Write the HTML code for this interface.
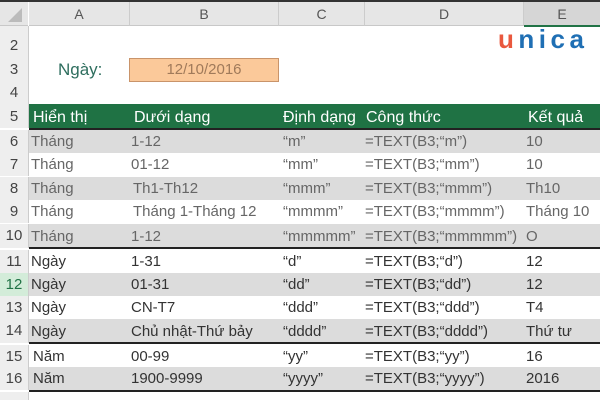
<!DOCTYPE html><html><head><meta charset="utf-8"><style>
body{margin:0;width:600px;height:400px;overflow:hidden;background:#fff;font-family:"Liberation Sans",sans-serif;position:relative}
.a{position:absolute}
.hdr{top:0;height:25px;background:#e6e6e6;border-bottom:1px solid #c8c8c8;color:#555;font-size:14px;line-height:26px;text-align:center}
.rh{left:0;width:28px;background:#eeeeee;color:#444;font-size:15px;text-align:center;border-right:1px solid #ccc}
.row{left:29px;width:571px;font-size:15px;color:#333}
.row span{position:absolute;top:0}
.g{background:#dcdcdc}
.l{color:#666}
</style></head><body>
<div class="a" style="left:0;top:0;width:600px;height:2px;background:#333"></div>
<div class="a hdr" style="left:0;width:28px;top:2px;height:23px"><svg width="28" height="23"><polygon points="22,6 22,20 8,20" fill="#bbb"/></svg></div>
<div class="a hdr" style="left:29px;width:100px;top:2px;height:23px;line-height:24px;border-right:1px solid #ccc">A</div>
<div class="a hdr" style="left:130px;width:148px;top:2px;height:23px;line-height:24px;border-right:1px solid #ccc">B</div>
<div class="a hdr" style="left:279px;width:85px;top:2px;height:23px;line-height:24px;border-right:1px solid #ccc">C</div>
<div class="a hdr" style="left:365px;width:158px;top:2px;height:23px;line-height:24px;border-right:1px solid #ccc">D</div>
<div class="a hdr" style="left:524px;width:76px;top:2px;height:23px;line-height:24px;background:#d6d6d6;border-bottom:2px solid #217346">E</div>
<div class="a rh" style="top:26px;height:8px"></div>
<div class="a rh" style="top:34px;height:23px;line-height:23px">2</div>
<div class="a rh" style="top:57px;height:25px;line-height:25px">3</div>
<div class="a rh" style="top:82px;height:22px;line-height:22px">4</div>
<div class="a" style="left:58px;top:60px;font-size:17px;color:#2e6e5e">Ngày:</div>
<div class="a" style="left:129px;top:58px;width:148px;height:22px;background:#fbc99a;border:1px solid #c9946a;color:#a07a5a;font-size:15px;line-height:22px;text-align:center">12/10/2016</div>
<div class="a" style="left:498px;top:24px;font-size:26px;font-weight:bold;letter-spacing:4.5px"><span style="color:#e9583e">u</span><span style="color:#1f6fb4">nica</span></div>
<div class="a rh" style="top:104px;height:24px;line-height:26px">5</div>
<div class="a" style="left:29px;top:104px;width:571px;height:24px;background:#1f7244;color:#fff;font-size:16px;line-height:27px">
<span class="a" style="left:4px">Hiển thị</span><span class="a" style="left:105px">Dưới dạng</span><span class="a" style="left:254px">Định dạng</span><span class="a" style="left:337px">Công thức</span><span class="a" style="left:499px">Kết quả</span></div>
<div class="a" style="left:29px;top:128px;width:571px;height:2px;background:#222"></div>
<div id="rows"></div>
<script>
var d=[["6","Tháng","1-12","“m”","=TEXT(B3;“m”)","10",1,1],
["7","Tháng","01-12","“mm”","=TEXT(B3;“mm”)","10",0,1],
["8","Tháng","Th1-Th12","“mmm”","=TEXT(B3;“mmm”)","Th10",1,1],
["9","Tháng","Tháng 1-Tháng 12","“mmmm”","=TEXT(B3;“mmmm”)","Tháng 10",0,1],
["10","Tháng","1-12","“mmmmm”","=TEXT(B3;“mmmmm”)","O",1,1],
["11","Ngày","1-31","“d”","=TEXT(B3;“d”)","12",0,0],
["12","Ngày","01-31","“dd”","=TEXT(B3;“dd”)","12",1,0],
["13","Ngày","CN-T7","“ddd”","=TEXT(B3;“ddd”)","T4",0,0],
["14","Ngày","Chủ nhật-Thứ bảy","“dddd”","=TEXT(B3;“dddd”)","Thứ tư",1,0],
["15","Năm","00-99","“yy”","=TEXT(B3;“yy”)","16",0,0],
["16","Năm","1900-9999","“yyyy”","=TEXT(B3;“yyyy”)","2016",1,0]];
var tops=[130,153,177,200,224,250,273,296,319,345,367],h="";
d.forEach(function(r,i){var t=tops[i],hh=(i==4?24:i==8?24:23);
var rc=r[0]=="12"?"background:#d3ecd9;color:#217346;":"";
h+='<div class="a rh" style="top:'+t+'px;height:'+hh+'px;line-height:'+hh+'px;'+rc+'">'+r[0]+'</div>';
h+='<div class="a row'+(r[6]?' g':'')+(r[7]?' l':'')+'" style="top:'+t+'px;height:'+hh+'px;line-height:'+(hh+1)+'px"><span style="left:'+(i>=9?4:2)+'px">'+r[1]+'</span><span style="left:'+(i==2||i==3?104:102)+'px">'+r[2]+'</span><span style="left:254px">'+r[3]+'</span><span style="left:336px">'+r[4]+'</span><span style="left:497px">'+r[5]+'</span></div>';});
h+='<div class="a" style="left:29px;top:247px;width:571px;height:2px;background:#222"></div>';
h+='<div class="a" style="left:29px;top:342px;width:571px;height:2px;background:#222"></div>';
h+='<div class="a" style="left:29px;top:390px;width:571px;height:2px;background:#222"></div>';
h+='<div class="a rh" style="top:392px;height:8px"></div>';
document.getElementById("rows").innerHTML=h;
</script>
</body></html>
